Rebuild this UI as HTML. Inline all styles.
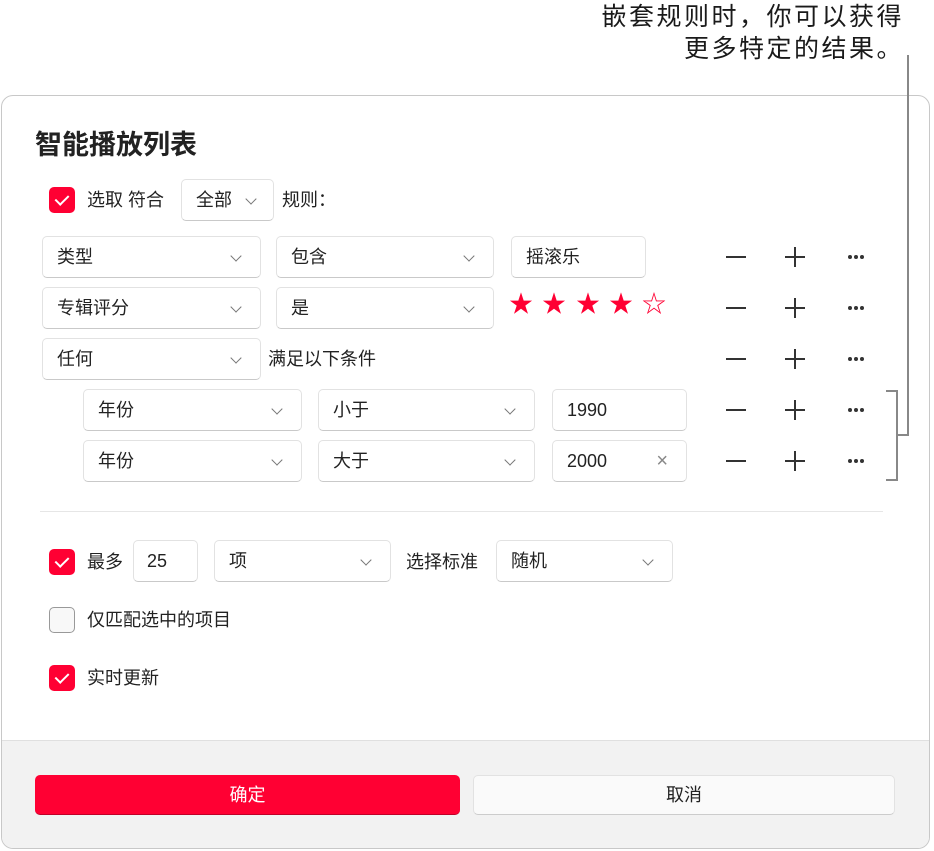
<!DOCTYPE html>
<html><head><meta charset="utf-8"><style>
*{box-sizing:border-box;margin:0;padding:0}
body{width:934px;height:851px;background:#fff;position:relative;overflow:hidden;font-family:"Liberation Sans","Noto Sans CJK SC",sans-serif;color:#222}
.a{position:absolute}
.note{right:30px;text-align:right;font-size:25px;line-height:32px;color:#1a1a1a;letter-spacing:2.5px}
.dlg{left:1px;top:95px;width:929px;height:754px;border:1.5px solid #c8c8c8;border-radius:12px;overflow:hidden;background:#fff}
.foot{left:0;top:644px;width:100%;height:120px;background:#f2f2f2;border-top:1px solid #e0e0e0}
.box{position:absolute;height:42px;border:1px solid #e2e2e2;border-bottom:1.5px solid #c9c9c9;border-radius:5px;background:#fff;font-size:18px;line-height:40px;padding-left:14px;color:#222}
.box .ch{position:absolute;right:20px;top:15px;width:8px;height:8px;border-right:1.3px solid #777;border-bottom:1.3px solid #777;transform:rotate(45deg)}
.lbl{position:absolute;font-size:18px;line-height:24px;color:#222}
.cb{position:absolute;width:26px;height:26px;border-radius:5px;background:#ff0033}
.cb:after{content:"";position:absolute;left:9px;top:5px;width:6px;height:11px;border-right:2px solid #fff;border-bottom:2px solid #fff;transform:rotate(45deg)}
.cb.off{background:#f8f8f8;border:1.5px solid #999}
.cb.off:after{display:none}
.minus{position:absolute;width:20px;height:1.6px;background:#333}
.plus{position:absolute;width:20px;height:20px}
.plus:before{content:"";position:absolute;left:0;top:9px;width:20px;height:1.6px;background:#333}
.plus:after{content:"";position:absolute;left:9px;top:0;width:1.6px;height:20px;background:#333}
.dots{position:absolute;width:4px;height:4px;border-radius:50%;background:#333;box-shadow:6px 0 0 #333,12px 0 0 #333}
.star{position:absolute;font-size:24px;color:#ff0033;line-height:26px}
.ln{position:absolute;background:#888}
</style></head><body>
<div class="a note" style="top:1px">嵌套规则时，你可以获得</div>
<div class="a note" style="top:33px">更多特定的结果。</div>

<div class="a dlg">
<div class="a foot"></div>
</div>

<div class="a" style="left:35px;top:127px;font-size:27px;font-weight:bold;color:#222;line-height:36px">智能播放列表</div>

<div class="cb" style="left:49px;top:187px"></div>
<div class="lbl" style="left:87px;top:188px">选取 符合</div>
<div class="box" style="left:181px;top:179px;width:93px">全部<span class="ch" style="right:18px"></span></div>
<div class="lbl" style="left:282px;top:188px">规则：</div>

<div class="box" style="left:42px;top:236px;width:219px">类型<span class="ch"></span></div>
<div class="box" style="left:276px;top:236px;width:218px">包含<span class="ch"></span></div>
<div class="box" style="left:511px;top:236px;width:135px">摇滚乐</div>

<div class="box" style="left:42px;top:287px;width:219px">专辑评分<span class="ch"></span></div>
<div class="box" style="left:276px;top:287px;width:218px">是<span class="ch"></span></div>
<div class="star" style="left:509px;top:292px">★</div>
<div class="star" style="left:542px;top:292px">★</div>
<div class="star" style="left:576px;top:292px">★</div>
<div class="star" style="left:609px;top:292px">★</div>
<div class="star" style="left:642px;top:292px">☆</div>

<div class="box" style="left:42px;top:338px;width:219px">任何<span class="ch"></span></div>
<div class="lbl" style="left:268px;top:347px">满足以下条件</div>

<div class="box" style="left:83px;top:389px;width:219px">年份<span class="ch"></span></div>
<div class="box" style="left:318px;top:389px;width:217px">小于<span class="ch"></span></div>
<div class="box" style="left:552px;top:389px;width:135px">1990</div>

<div class="box" style="left:83px;top:440px;width:219px">年份<span class="ch"></span></div>
<div class="box" style="left:318px;top:440px;width:217px">大于<span class="ch"></span></div>
<div class="box" style="left:552px;top:440px;width:135px">2000<span style="position:absolute;right:18px;top:0;color:#888;font-size:20px">×</span></div>

<div class="minus" style="left:726px;top:256px"></div><div class="plus" style="left:785px;top:247px"></div><div class="dots" style="left:848px;top:255px"></div>
<div class="minus" style="left:726px;top:307px"></div><div class="plus" style="left:785px;top:298px"></div><div class="dots" style="left:848px;top:306px"></div>
<div class="minus" style="left:726px;top:358px"></div><div class="plus" style="left:785px;top:349px"></div><div class="dots" style="left:848px;top:357px"></div>
<div class="minus" style="left:726px;top:409px"></div><div class="plus" style="left:785px;top:400px"></div><div class="dots" style="left:848px;top:408px"></div>
<div class="minus" style="left:726px;top:460px"></div><div class="plus" style="left:785px;top:451px"></div><div class="dots" style="left:848px;top:459px"></div>

<div class="ln" style="left:907px;top:55px;width:2px;height:381px"></div>
<div class="ln" style="left:896px;top:434px;width:13px;height:2px"></div>
<div class="ln" style="left:896px;top:390px;width:2px;height:91px"></div>
<div class="ln" style="left:886px;top:390px;width:12px;height:2px"></div>
<div class="ln" style="left:886px;top:479px;width:12px;height:2px"></div>

<div class="a" style="left:40px;top:511px;width:843px;height:1px;background:#e6e6e6"></div>

<div class="cb" style="left:49px;top:549px"></div>
<div class="lbl" style="left:87px;top:550px">最多</div>
<div class="box" style="left:133px;top:540px;width:65px;padding-left:13px">25</div>
<div class="box" style="left:214px;top:540px;width:177px">项<span class="ch"></span></div>
<div class="lbl" style="left:406px;top:550px">选择标准</div>
<div class="box" style="left:496px;top:540px;width:177px">随机<span class="ch"></span></div>

<div class="cb off" style="left:49px;top:607px"></div>
<div class="lbl" style="left:87px;top:608px">仅匹配选中的项目</div>
<div class="cb" style="left:49px;top:665px"></div>
<div class="lbl" style="left:87px;top:666px">实时更新</div>

<div class="a" style="left:35px;top:775px;width:425px;height:40px;background:#ff0033;border-radius:5px;border-bottom:1.5px solid #c00028;color:#fff;font-size:18px;line-height:40px;text-align:center">确定</div>
<div class="a" style="left:473px;top:775px;width:422px;height:40px;background:#fafafa;border:1px solid #e2e2e2;border-bottom:1.5px solid #ccc;border-radius:5px;color:#222;font-size:18px;line-height:38px;text-align:center">取消</div>
</body></html>
